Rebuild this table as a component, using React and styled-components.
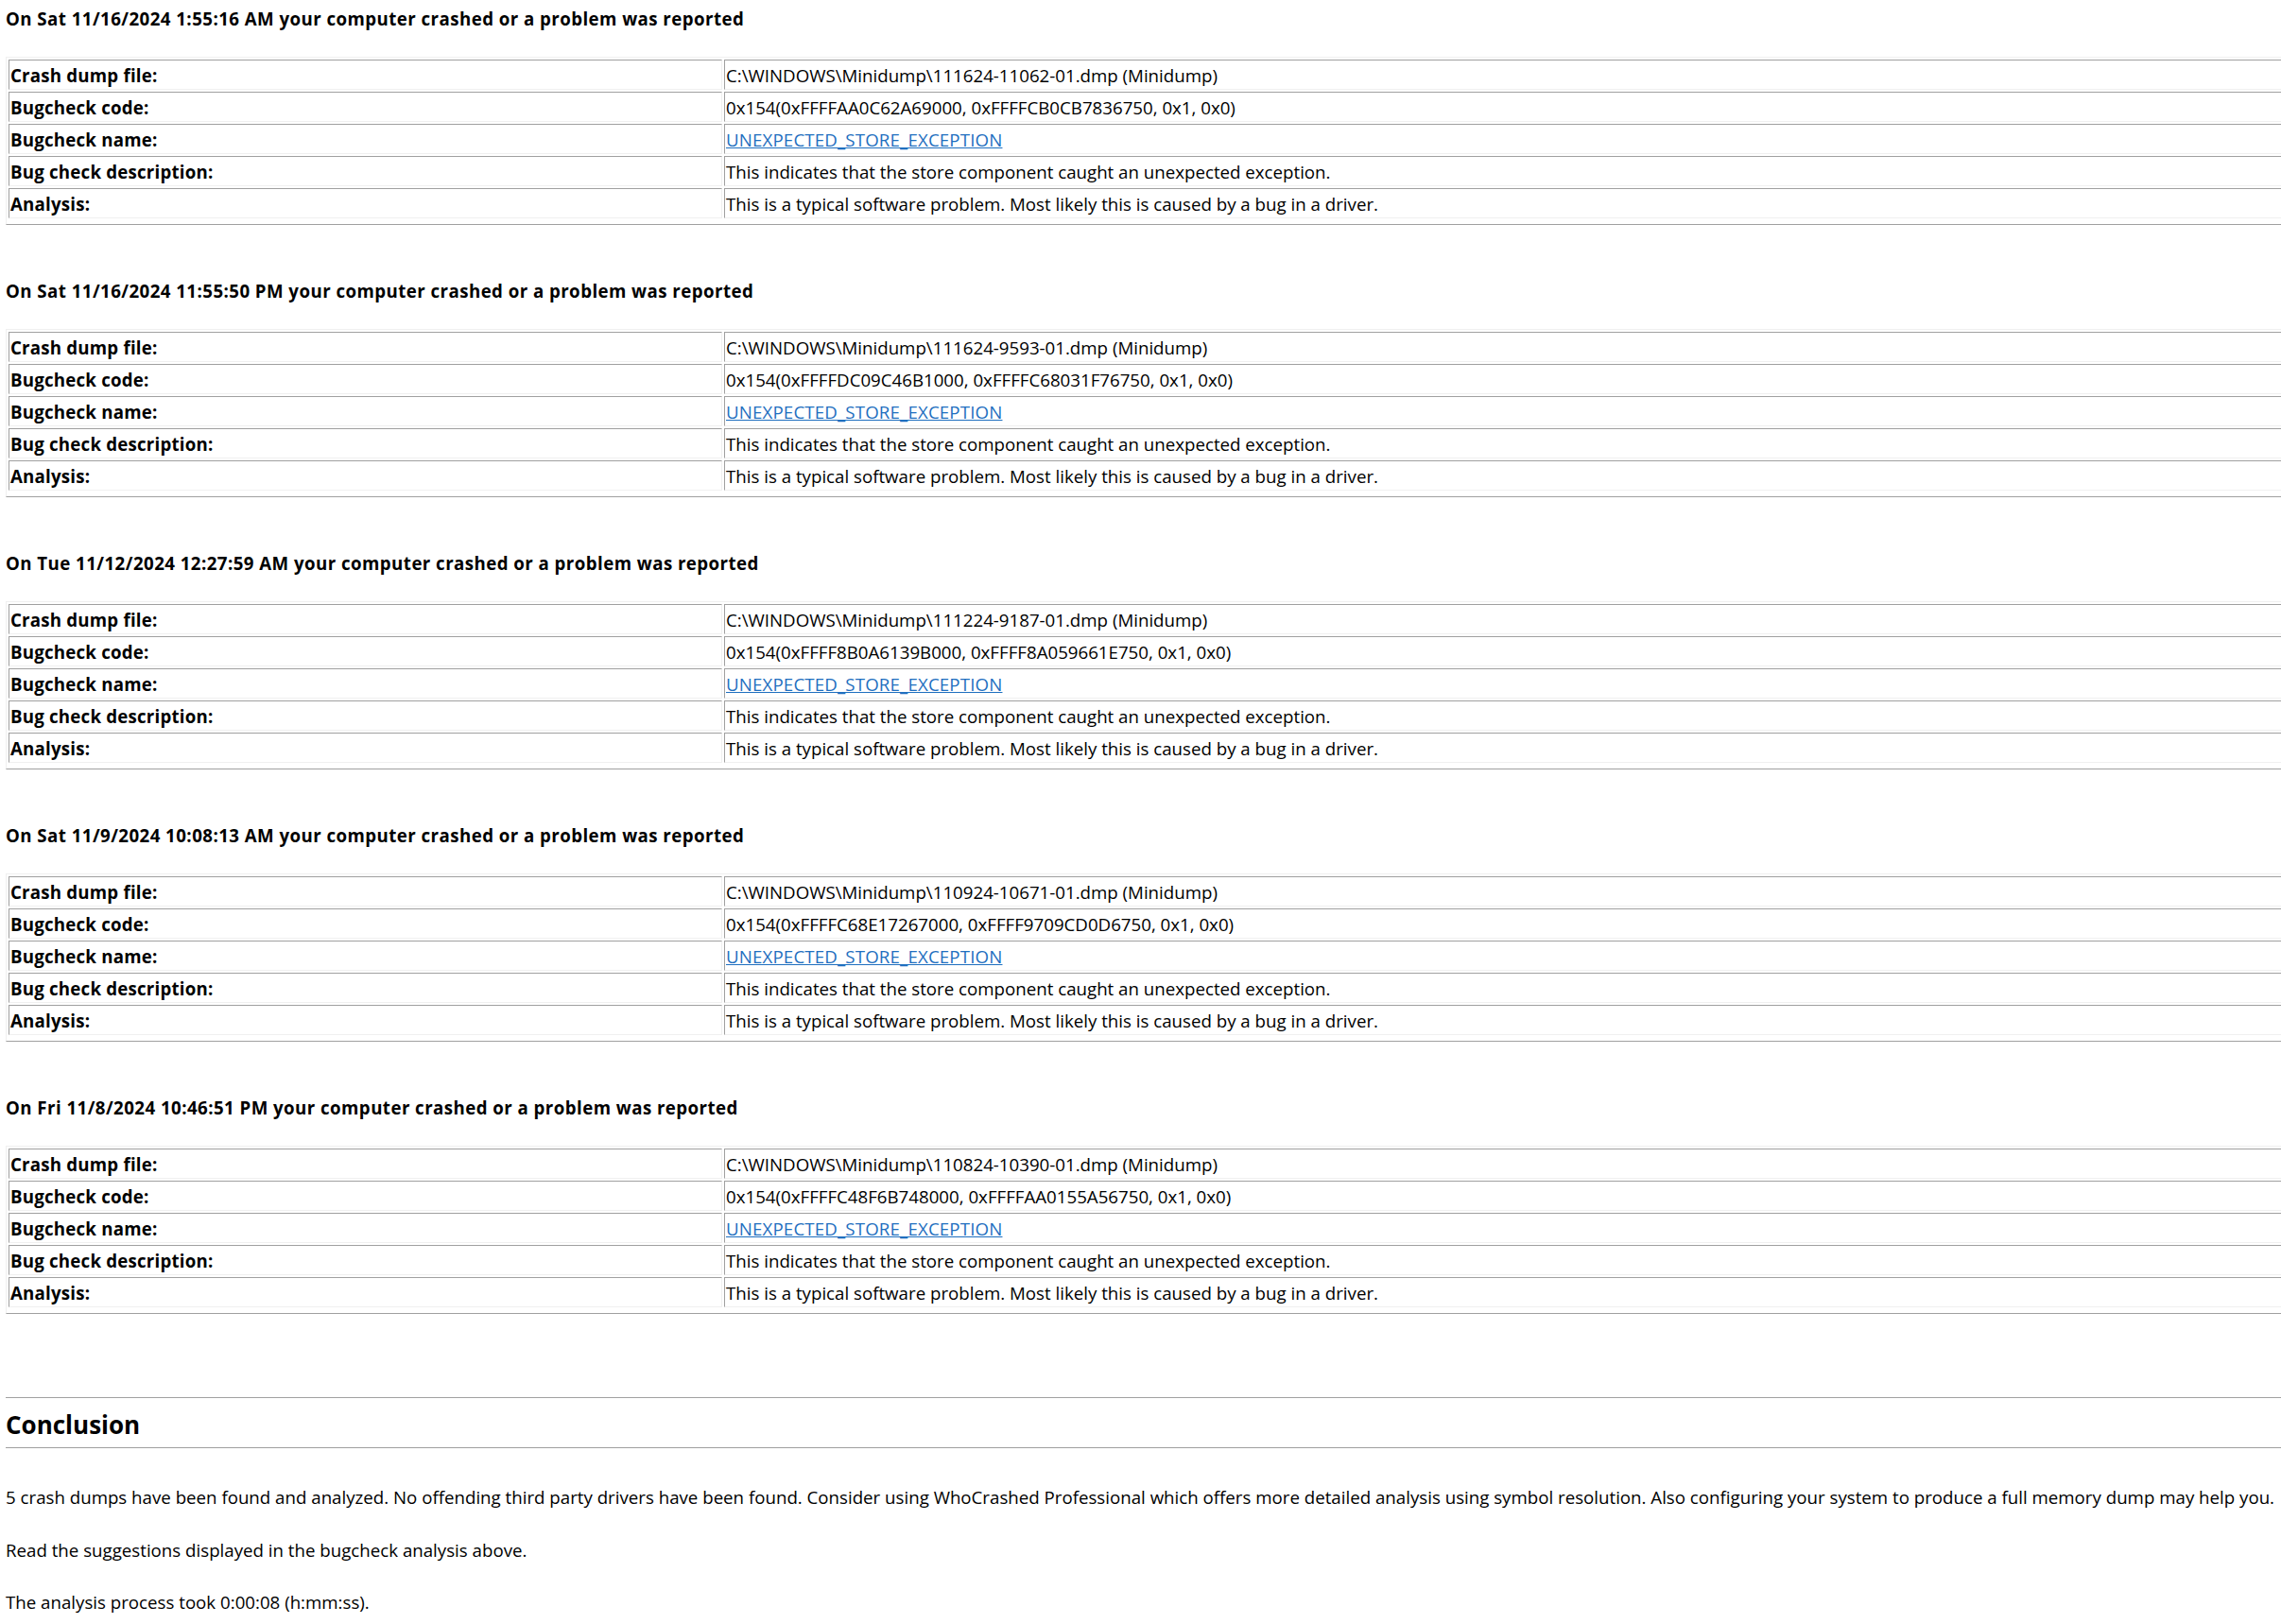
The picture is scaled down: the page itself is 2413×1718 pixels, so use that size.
import React from "react";
import styled, { createGlobalStyle } from "styled-components";

const GlobalStyle = createGlobalStyle`
  html, body { margin: 0; padding: 0; background: #ffffff; }
  body { overflow: hidden; }
`;

const Page = styled.main`
  display: flex;
  flex-direction: column;
  width: 2440px;
  padding: 8px 0 0 6px;
  font-family: "Open Sans", "Noto Sans", sans-serif;
  font-size: 18.7px;
  line-height: 24px;
  color: #000;
`;

const Crash = styled.section`
  display: flex;
  flex-direction: column;
  gap: 28px;
  margin-bottom: 58px;
`;

const CrashTitle = styled.h3`
  margin: 0;
  font-size: 18.7px;
  line-height: 24px;
  font-weight: 700;
  letter-spacing: 0.44px;
  white-space: nowrap;
`;

const Details = styled.table`
  width: 100%;
  table-layout: fixed;
  border-collapse: separate;
  border-spacing: 2px;
  border: 1px solid;
  border-color: #f0f0f0 #a0a0a0 #a0a0a0 #f0f0f0;
  padding: 0 0 4px 0;
`;

const cell = `
  box-sizing: border-box;
  padding: 4px 1px 2px;
  border: 1px solid;
  border-color: #a0a0a0 #f0f0f0 #f0f0f0 #a0a0a0;
  text-align: left;
  vertical-align: top;
  white-space: nowrap;
  line-height: 24px;
`;

const Label = styled.th`
  ${cell}
  width: 755px;
  font-weight: 700;
  letter-spacing: 0.2px;
`;

const Value = styled.td`
  ${cell}
  font-weight: 400;
`;

const Link = styled.a`
  color: #1f6fbf;
  text-decoration: underline;
  letter-spacing: 0.15px;
`;

const Conclusion = styled.section`
  margin-top: 30px;
`;

const Rule = styled.hr`
  margin: 0;
  height: 0;
  border: 0;
  border-top: 1px solid #a0a0a0;
`;

const SectionTitle = styled.h2`
  margin: 10px 0 6px;
  font-size: 26px;
  line-height: 36px;
  font-weight: 700;
`;

const Paragraphs = styled.div`
  display: flex;
  flex-direction: column;
  gap: 31.5px;
  margin-top: 40px;
`;

const Para = styled.p`
  margin: 0;
  white-space: nowrap;
`;

const crashes = [
  {
    when: "On Sat 11/16/2024 1:55:16 AM",
    file: "C:\\WINDOWS\\Minidump\\111624-11062-01.dmp (Minidump)",
    code: "0x154(0xFFFFAA0C62A69000, 0xFFFFCB0CB7836750, 0x1, 0x0)",
  },
  {
    when: "On Sat 11/16/2024 11:55:50 PM",
    file: "C:\\WINDOWS\\Minidump\\111624-9593-01.dmp (Minidump)",
    code: "0x154(0xFFFFDC09C46B1000, 0xFFFFC68031F76750, 0x1, 0x0)",
  },
  {
    when: "On Tue 11/12/2024 12:27:59 AM",
    file: "C:\\WINDOWS\\Minidump\\111224-9187-01.dmp (Minidump)",
    code: "0x154(0xFFFF8B0A6139B000, 0xFFFF8A059661E750, 0x1, 0x0)",
  },
  {
    when: "On Sat 11/9/2024 10:08:13 AM",
    file: "C:\\WINDOWS\\Minidump\\110924-10671-01.dmp (Minidump)",
    code: "0x154(0xFFFFC68E17267000, 0xFFFF9709CD0D6750, 0x1, 0x0)",
  },
  {
    when: "On Fri 11/8/2024 10:46:51 PM",
    file: "C:\\WINDOWS\\Minidump\\110824-10390-01.dmp (Minidump)",
    code: "0x154(0xFFFFC48F6B748000, 0xFFFFAA0155A56750, 0x1, 0x0)",
  },
];

function CrashReport({ crash }) {
  return (
    <Crash>
      <CrashTitle>{crash.when} your computer crashed or a problem was reported</CrashTitle>
      <Details>
        <tbody>
          <tr>
            <Label>Crash dump file:</Label>
            <Value>{crash.file}</Value>
          </tr>
          <tr>
            <Label>Bugcheck code:</Label>
            <Value>{crash.code}</Value>
          </tr>
          <tr>
            <Label>Bugcheck name:</Label>
            <Value>
              <Link href="#">UNEXPECTED_STORE_EXCEPTION</Link>
            </Value>
          </tr>
          <tr>
            <Label>Bug check description:</Label>
            <Value>This indicates that the store component caught an unexpected exception.</Value>
          </tr>
          <tr>
            <Label>Analysis:</Label>
            <Value>This is a typical software problem. Most likely this is caused by a bug in a driver.</Value>
          </tr>
        </tbody>
      </Details>
    </Crash>
  );
}

export default function App() {
  return (
    <>
      <GlobalStyle />
      <Page>
        {crashes.map((c) => (
          <CrashReport key={c.when} crash={c} />
        ))}
        <Conclusion>
          <Rule />
          <SectionTitle>Conclusion</SectionTitle>
          <Rule />
          <Paragraphs>
            <Para>
              5 crash dumps have been found and analyzed. No offending third party drivers have been found. Consider using WhoCrashed Professional which offers more detailed analysis using symbol resolution. Also configuring your system to produce a full memory dump may help you.
            </Para>
            <Para>Read the suggestions displayed in the bugcheck analysis above.</Para>
            <Para>The analysis process took 0:00:08 (h:mm:ss).</Para>
          </Paragraphs>
        </Conclusion>
      </Page>
    </>
  );
}
